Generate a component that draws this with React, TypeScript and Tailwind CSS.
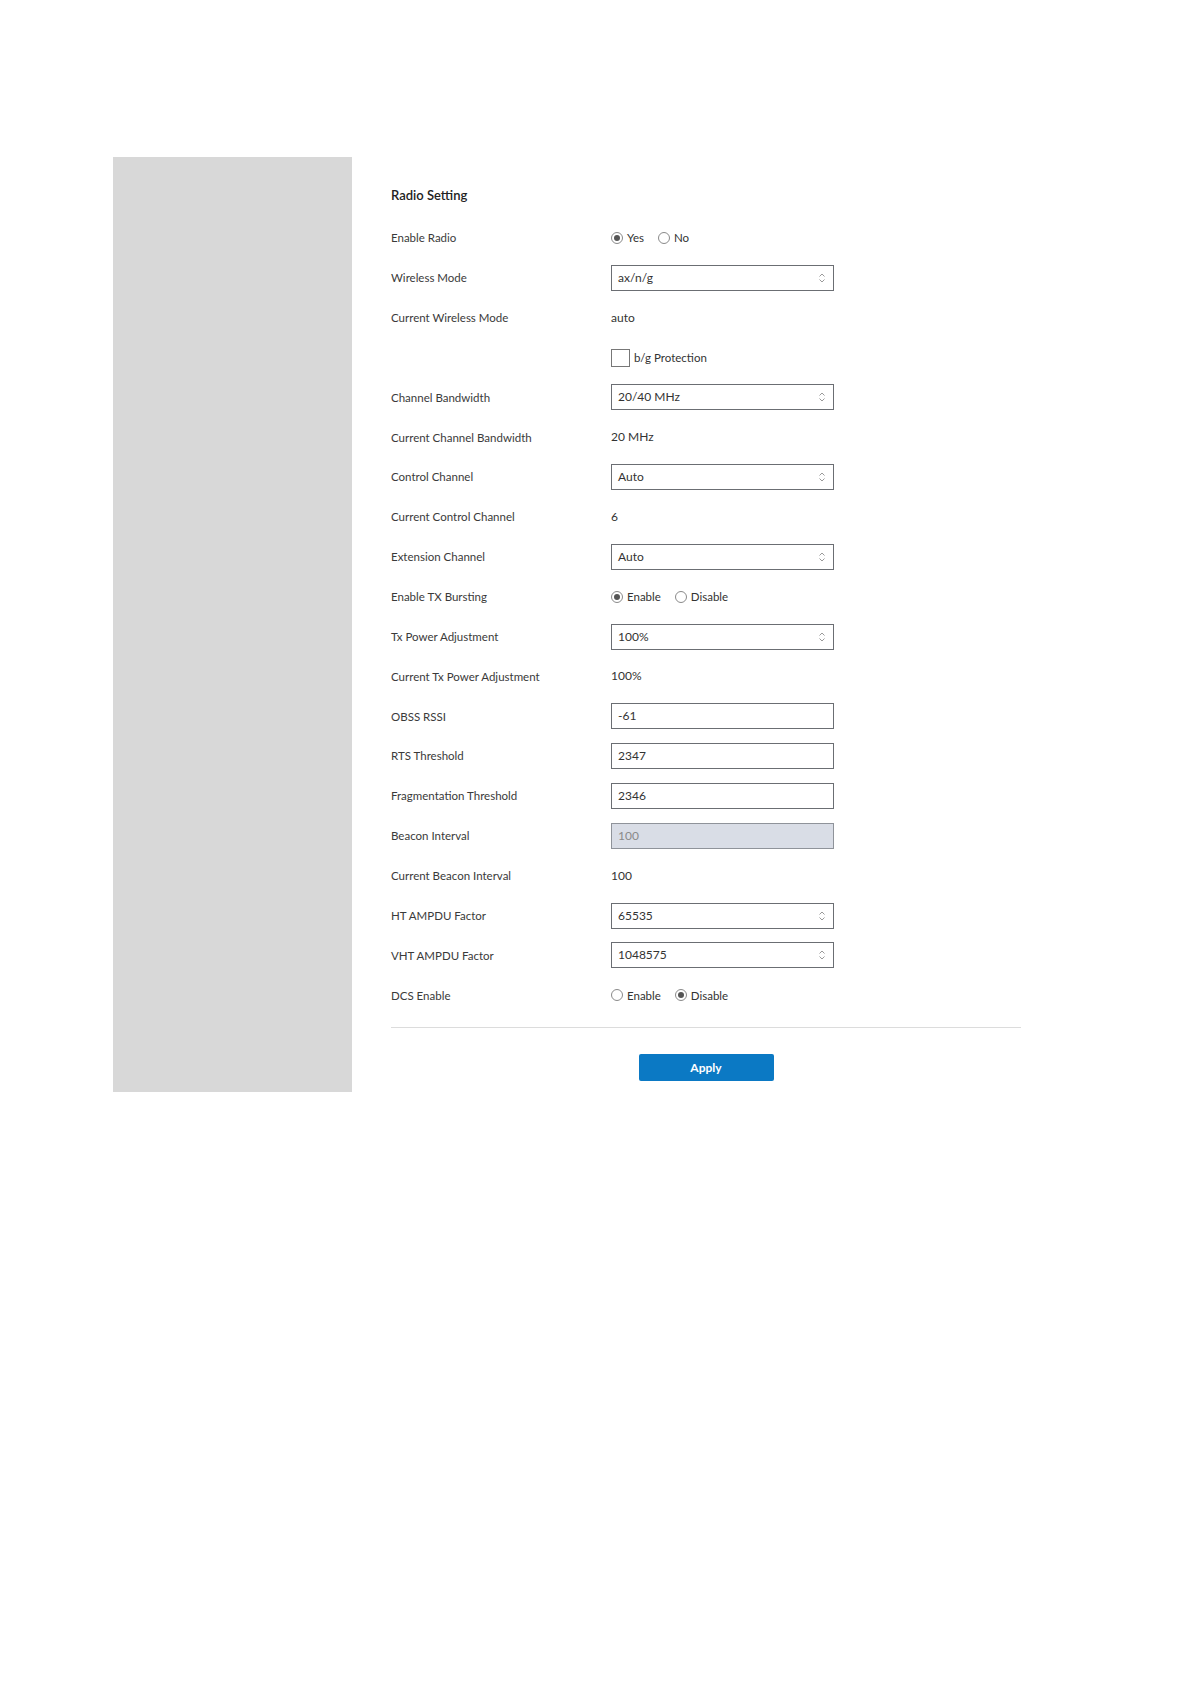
import React from "react";

function Chevrons() {
  return (
    <svg width="8" height="12" viewBox="0 0 8 12" className="absolute right-[7px] top-1/2 -translate-y-1/2">
      <path d="M1.5 4.5 L4 2 L6.5 4.5" fill="none" stroke="#9a9a9a" strokeWidth="1" />
      <path d="M1.5 7.5 L4 10 L6.5 7.5" fill="none" stroke="#9a9a9a" strokeWidth="1" />
    </svg>
  );
}

function Select({ value }: { value: string }) {
  return (
    <div className="relative w-[223px] h-[26px] border border-[#6b6e73] bg-white flex items-center pl-[6px] text-[12px] text-[#333]">
      {value}
      <Chevrons />
    </div>
  );
}

function Input({ value, disabled }: { value: string; disabled?: boolean }) {
  return (
    <div
      className={
        disabled
          ? "w-[223px] h-[26px] border border-[#8f939a] bg-[#d9dde6] flex items-center pl-[6px] text-[12px] text-[#8a8a8a]"
          : "w-[223px] h-[26px] border border-[#6b6e73] bg-white flex items-center pl-[6px] text-[12px] text-[#333]"
      }
    >
      {value}
    </div>
  );
}

function Radio({ checked, label }: { checked: boolean; label: string }) {
  return (
    <div className="flex items-center gap-[4px]">
      <span className="w-[12px] h-[12px] rounded-full border border-[#8a8a8a] bg-white flex items-center justify-center">
        {checked && <span className="w-[6px] h-[6px] rounded-full bg-[#555]" />}
      </span>
      <span className="text-[11.5px] text-[#333]">{label}</span>
    </div>
  );
}

function RadioPair({ a, b, first }: { a: string; b: string; first: boolean }) {
  return (
    <div className="flex items-center gap-[14px]">
      <Radio checked={first} label={a} />
      <Radio checked={!first} label={b} />
    </div>
  );
}

function Row({ label, children }: { label: string; children: React.ReactNode }) {
  return (
    <div className="flex items-center h-[39.86px]">
      <div className="w-[220px] text-[11.5px] text-[#3a3a3a]">{label}</div>
      <div className="flex items-center text-[12px] text-[#333]">{children}</div>
    </div>
  );
}

export default function App() {
  return (
    <div className="min-h-[1684px] bg-white pt-[157px] pl-[113px]" style={{ fontFamily: "Lato, 'Noto Sans', sans-serif" }}>
      <div className="flex">
        <div className="w-[239px] bg-[#d8d8d8]" />
        <div className="w-[708px] pl-[39px] pt-[19px] pb-[11px]">
          <div className="h-[42px] flex items-center pb-[3px] text-[13px] font-semibold text-[#222]">Radio Setting</div>
          <Row label="Enable Radio">
            <RadioPair a="Yes" b="No" first={true} />
          </Row>
          <Row label="Wireless Mode">
            <Select value="ax/n/g" />
          </Row>
          <Row label="Current Wireless Mode">auto</Row>
          <Row label="">
            <div className="flex items-center gap-[4px]">
              <span className="w-[19px] h-[18px] border border-[#777] bg-white" />
              <span className="text-[11.5px]">b/g Protection</span>
            </div>
          </Row>
          <Row label="Channel Bandwidth">
            <Select value="20/40 MHz" />
          </Row>
          <Row label="Current Channel Bandwidth">20 MHz</Row>
          <Row label="Control Channel">
            <Select value="Auto" />
          </Row>
          <Row label="Current Control Channel">6</Row>
          <Row label="Extension Channel">
            <Select value="Auto" />
          </Row>
          <Row label="Enable TX Bursting">
            <RadioPair a="Enable" b="Disable" first={true} />
          </Row>
          <Row label="Tx Power Adjustment">
            <Select value="100%" />
          </Row>
          <Row label="Current Tx Power Adjustment">100%</Row>
          <Row label="OBSS RSSI">
            <Input value="-61" />
          </Row>
          <Row label="RTS Threshold">
            <Input value="2347" />
          </Row>
          <Row label="Fragmentation Threshold">
            <Input value="2346" />
          </Row>
          <Row label="Beacon Interval">
            <Input value="100" disabled />
          </Row>
          <Row label="Current Beacon Interval">100</Row>
          <Row label="HT AMPDU Factor">
            <Select value="65535" />
          </Row>
          <Row label="VHT AMPDU Factor">
            <Select value="1048575" />
          </Row>
          <Row label="DCS Enable">
            <RadioPair a="Enable" b="Disable" first={false} />
          </Row>
          <div className="w-[630px] mt-[12px] border-t border-[#dcdcdc]" />
          <div className="w-[630px] flex justify-center mt-[26px]">
            <button className="w-[135px] h-[27px] rounded-[2px] bg-[#0b79c4] text-white text-[12px] font-bold">Apply</button>
          </div>
        </div>
      </div>
    </div>
  );
}
